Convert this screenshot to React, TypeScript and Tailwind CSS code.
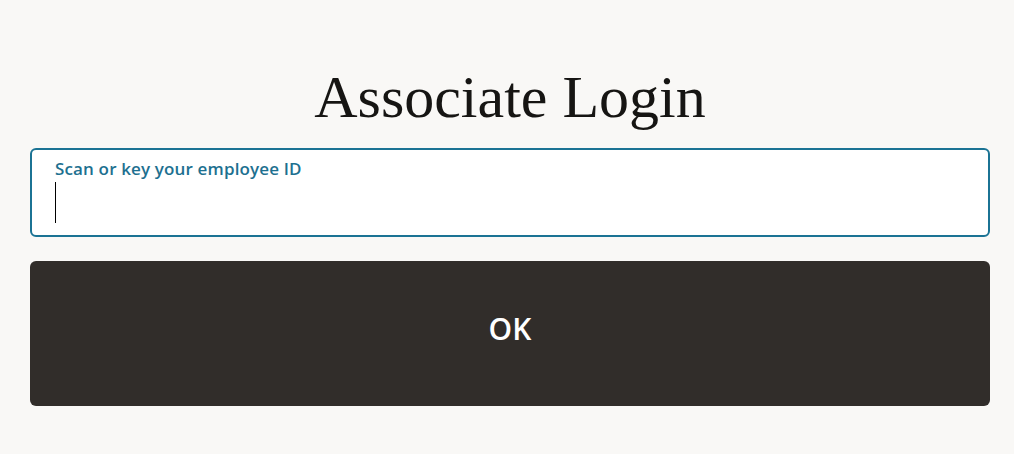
export default function App() {
  return (
    <div className="min-h-[454px] w-full bg-[#f9f8f6] pl-[30px] pr-[24px] pt-[63px] font-['Open_Sans',sans-serif]">
      <h1 className="text-center font-['Georgia','Liberation_Serif',serif] text-[60px] leading-[68px] text-[#161513]">
        Associate Login
      </h1>
      <div className="mt-[17px] flex h-[89px] flex-col rounded-[6px] border-2 border-[#1b7394] bg-white pl-[23px] pt-[8px]">
        <label className="text-[17px] leading-[22px] font-semibold tracking-[0.15px] text-[#1d7090]">
          Scan or key your employee ID
        </label>
        <div className="mt-[2px] h-[41px] w-px bg-black" />
      </div>
      <button className="mt-[24px] flex h-[145px] w-full items-center justify-center rounded-[6px] bg-[#312d2a] pb-[10px] text-[30px] font-semibold text-white">
        OK
      </button>
    </div>
  );
}
